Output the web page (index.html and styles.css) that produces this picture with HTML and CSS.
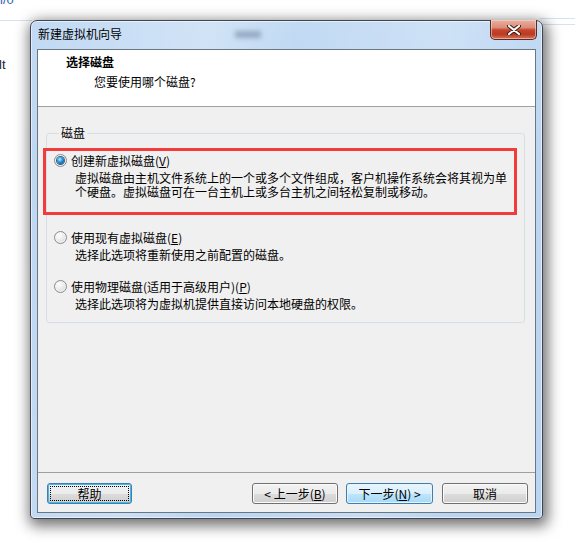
FILE: index.html
```html
<!DOCTYPE html>
<html lang="zh-CN">
<head>
<meta charset="utf-8">
<title>新建虚拟机向导</title>
<link rel="stylesheet" href="styles.css">
</head>
<body>
<div class="desk">
  <div class="bg-text bg-top">l/0</div>
  <div class="bg-line bg-line-left"></div>
  <div class="bg-line bg-line-r1"></div>
  <div class="bg-line bg-line-r2"></div>
  <div class="bg-text bg-lt">lt</div>

  <div class="window">
    <div class="titlebar">
      <span class="title">新建虚拟机向导</span>
      <span class="glass-blur"></span>
    </div>
    <div class="close">
      <svg width="14" height="10" viewBox="0 0 14 10">
        <path d="M2 1 L12 9 M12 1 L2 9" stroke="#3a1a14" stroke-width="4" stroke-linecap="round"/>
        <path d="M2 1 L12 9 M12 1 L2 9" stroke="#ffffff" stroke-width="2.2" stroke-linecap="round"/>
      </svg>
    </div>
    <div class="client">
      <div class="header">
        <div class="h-title">选择磁盘</div>
        <div class="h-sub">您要使用哪个磁盘?</div>
      </div>
      <div class="content">
        <fieldset class="group">
          <legend>磁盘</legend>
          <div class="option first">
            <div class="row"><span class="radio checked"><span class="dot"></span></span><span>创建新虚拟磁盘(<u>V</u>)</span></div>
            <div class="desc">虚拟磁盘由主机文件系统上的一个或多个文件组成，客户机操作系统会将其视为单<br>个硬盘。虚拟磁盘可在一台主机上或多台主机之间轻松复制或移动。</div>
            <div class="highlight"></div>
          </div>
          <div class="option second">
            <div class="row"><span class="radio"></span><span>使用现有虚拟磁盘(<u>E</u>)</span></div>
            <div class="desc">选择此选项将重新使用之前配置的磁盘。</div>
          </div>
          <div class="option third">
            <div class="row"><span class="radio"></span><span>使用物理磁盘(适用于高级用户)(<u>P</u>)</span></div>
            <div class="desc">选择此选项将为虚拟机提供直接访问本地硬盘的权限。</div>
          </div>
        </fieldset>
      </div>
      <div class="footer">
        <button class="btn focus"><span class="focus-ring">帮助</span></button>
        <span class="spacer"></span>
        <button class="btn back">&lt; 上一步(<u>B</u>)</button>
        <button class="btn hot next">下一步(<u>N</u>) &gt;</button>
        <button class="btn cancel">取消</button>
      </div>
    </div>
  </div>
</div>
</body>
</html>
```
FILE: styles.css
```css
* { box-sizing: border-box; }
html, body { margin: 0; padding: 0; background: #ffffff; }
body {
  font-family: "Noto Sans CJK SC", "Liberation Sans", sans-serif;
  font-size: 12px;
  color: #000;
}
.desk {
  position: relative;
  width: 575px;
  height: 546px;
  overflow: hidden;
  background: #ffffff;
}
.bg-text {
  position: absolute;
  font-family: "Liberation Sans", sans-serif;
  font-size: 13px;
  line-height: 14px;
}
.bg-top { left: 0; top: -7px; color: #2f62b0; }
.bg-lt { left: -1px; top: 58px; color: #222; }
.bg-line { position: absolute; height: 1px; background: #d4e2f1; }
.bg-line-left { left: 0; top: 20px; width: 32px; }
.bg-line-r1 { left: 540px; top: 18px; width: 35px; }
.bg-line-r2 { left: 540px; top: 24px; width: 35px; }

.window {
  position: absolute;
  left: 30px;
  top: 20px;
  width: 513px;
  height: 499px;
  border: 1px solid #3d4650;
  border-radius: 7px 7px 4px 4px;
  background:
    linear-gradient(100deg, rgba(255,255,255,0) 0%, rgba(255,255,255,0.25) 30%, rgba(255,255,255,0) 45%, rgba(255,255,255,0.2) 70%, rgba(255,255,255,0) 85%),
    linear-gradient(180deg, #c2daf4 0%, #bcd6f1 30%, #bad5f1 100%);
  box-shadow: 2px 4px 14px 3px rgba(0,0,0,0.55), inset 0 0 0 1px rgba(255,255,255,0.55);
  display: flex;
  flex-direction: column;
  padding: 0 6px 5px 6px;
}
.titlebar {
  position: relative;
  height: 28px;
  display: flex;
  align-items: center;
  padding: 0 0 2px 1px;
}
.title { line-height: 16px; color: #000; }
.glass-blur {
  position: absolute;
  left: 198px;
  top: 10px;
  width: 26px;
  height: 7px;
  background: rgba(80,105,130,0.45);
  filter: blur(2.5px);
}
.close {
  position: absolute;
  top: -1px;
  right: 5px;
  width: 47px;
  height: 20px;
  border: 1px solid #5b2a22;
  border-top: none;
  border-radius: 0 0 5px 5px;
  background: linear-gradient(180deg, #e8b0a2 0%, #dc8c78 40%, #c8452c 52%, #b93a22 75%, #d9735a 100%);
  box-shadow: inset 0 0 0 1px rgba(255,220,210,0.55);
  display: flex;
  align-items: center;
  justify-content: center;
}
.client {
  flex: 1;
  display: flex;
  flex-direction: column;
  border: 1px solid #6a7684;
  background: #f0f0f0;
}
.header {
  height: 57px;
  background: #ffffff;
  border-bottom: 1px solid #a0a0a0;
  padding: 4px 0 0 28px;
}
.h-title { font-weight: bold; line-height: 16px; }
.h-sub { line-height: 16px; margin: 4px 0 0 28px; }
.content {
  flex: 1;
  display: flex;
  flex-direction: column;
  padding: 19px 10px 9px 8px;
}
.group {
  margin: 0;
  padding: 14px 0 11px 7px;
  border: 1px solid #d5dfe5;
  border-radius: 3px;
  min-width: 0;
}
.group legend {
  margin-left: 5px;
  padding: 0 2px;
  line-height: 14px;
}
.option { position: relative; }
.row {
  display: flex;
  align-items: center;
  gap: 4px;
  line-height: 14px;
  height: 14px;
  white-space: nowrap;
}
.desc {
  padding-left: 21px;
  margin-top: 3px;
  line-height: 14px;
  white-space: nowrap;
}
.second { margin-top: 32px; }
.third { margin-top: 18px; }
.highlight {
  position: absolute;
  left: -11px;
  top: -6px;
  width: 474px;
  height: 67px;
  border: 3px solid #f23b3b;
  pointer-events: none;
}
.radio {
  flex: none;
  width: 13px;
  height: 13px;
  border-radius: 50%;
  border: 1px solid #8b8b8b;
  background: radial-gradient(circle at 35% 30%, #ffffff 0%, #ececec 45%, #cfcfcf 100%);
  box-shadow: inset 0 0 0 1px #f4f4f4;
  display: flex;
  align-items: center;
  justify-content: center;
  margin-top: -2px;
}
.radio .dot {
  width: 7px;
  height: 7px;
  border-radius: 50%;
  background: radial-gradient(circle at 40% 35%, #b8f0ff 0%, #38a6e0 35%, #15549c 75%, #0d3566 100%);
  box-shadow: 0 0 0 1px #2a5d8f;
}
u { text-decoration: underline; text-underline-offset: 1px; }
.footer {
  height: 40px;
  border-top: 1px solid #a0a0a0;
  display: flex;
  align-items: flex-start;
  padding: 10px 7px 0 9px;
}
.spacer { flex: 1; }
.btn {
  font-family: "Noto Sans CJK SC", "Liberation Sans", sans-serif;
  font-size: 12px;
  color: #000;
  height: 21px;
  width: 86px;
  padding: 0;
  line-height: 17px;
  border: 1px solid #707070;
  border-radius: 3px;
  background: linear-gradient(180deg, #f2f2f2 0%, #ebebeb 50%, #dddddd 51%, #cfcfcf 100%);
  box-shadow: inset 0 0 0 1px #fbfbfb;
  display: flex;
  align-items: center;
  justify-content: center;
  white-space: nowrap;
}
.btn.focus {
  width: 85px;
  border-color: #3c7fb1;
  box-shadow: inset 0 0 0 1px #48b6e8;
  padding: 2px;
}
.focus-ring {
  display: flex;
  align-items: center;
  justify-content: center;
  width: 100%;
  height: 100%;
  border: 1px dotted #000;
}
.btn.hot {
  width: 87px;
  border-color: #3c7fb1;
  background: linear-gradient(180deg, #eaf6fd 0%, #d9f0fc 50%, #bee6fd 51%, #a7d9f5 100%);
  box-shadow: inset 0 0 0 1px #e4f4fc;
}
.next { margin-left: 8px; }
.cancel { margin-left: 9px; }
```
